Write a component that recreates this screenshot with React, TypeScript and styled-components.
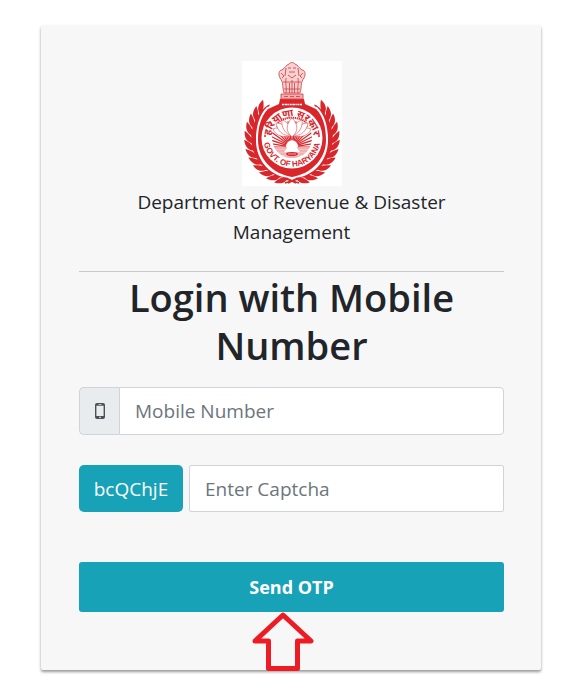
import React, { useState } from "react";
import styled, { createGlobalStyle } from "styled-components";

const GlobalStyle = createGlobalStyle`
  *, *::before, *::after { box-sizing: border-box; }
  body {
    margin: 0;
    background: #fff;
    color: #212529;
    font-family: "Open Sans", "Noto Sans", sans-serif;
    font-size: 19px;
    line-height: 30px;
  }
`;

const Page = styled.main`
  padding: 25px 40px 18px;
`;

const Card = styled.form`
  max-width: 500px;
  margin: 0 auto;
  padding: 36px 37px 58px 38px;
  background: #f7f7f7;
  border-radius: 2px;
  box-shadow: 0 2px 3px rgba(0, 0, 0, 0.4);
`;

const Header = styled.header`
  display: flex;
  flex-direction: column;
  align-items: center;
  padding-bottom: 24px;
  border-bottom: 1px solid #c9c9c9;
  text-align: center;
`;

const Department = styled.p`
  max-width: 340px;
  margin: 1px 0 0;
`;

const Title = styled.h1`
  margin: 1px 0 18px;
  font-size: 38px;
  font-weight: 600;
  line-height: 48px;
  text-align: center;
`;

const Row = styled.div<{ $gap: number; $after: number }>`
  display: flex;
  gap: ${(p) => p.$gap}px;
  margin-bottom: ${(p) => p.$after}px;
`;

const IconLabel = styled.label`
  display: flex;
  align-items: center;
  justify-content: center;
  width: 40px;
  background: #e9ecef;
  border: 1px solid #ced4da;
  border-right: 0;
  border-radius: 5px 0 0 5px;
`;

const CaptchaCode = styled.label`
  flex: none;
  width: 104px;
  background: #17a2b8;
  border-radius: 5px;
  color: #fff;
  line-height: 48px;
  height: 47px;
  text-align: center;
`;

const TextInput = styled.input<{ $round?: boolean }>`
  flex: 1;
  min-width: 0;
  height: ${(p) => (p.$round ? 48 : 47)}px;
  padding: 0 15px;
  background: #fff;
  border: 1px solid #ced4da;
  border-radius: ${(p) => (p.$round ? "0 4px 4px 0" : "2px")};
  color: #495057;
  font: inherit;
  &::placeholder { color: #6c757d; opacity: 1; }
`;

const SubmitArea = styled.div`
  position: relative;
`;

const SubmitButton = styled.button`
  display: block;
  width: 100%;
  height: 50px;
  padding: 0;
  background: #17a2b8;
  border: 0;
  border-radius: 3px;
  color: #fff;
  font: inherit;
  font-size: 18px;
  font-weight: 700;
  cursor: pointer;
`;

const Pointer = styled.svg`
  position: absolute;
  top: 100%;
  left: 48%;
  transform: translateX(-50%);
  pointer-events: none;
`;

const RED = "#d9262b";
const LEAF_ANGLES = [-42, -31, -20, -9, 2, 13, 24, 35, 46, 57, 68, 79];
const RAY_ANGLES = Array.from({ length: 21 }, (_, i) => -90 + i * 9);

const Wreath = () => (
  <g fill={RED}>
    {LEAF_ANGLES.map((a) => (
      <g key={a} transform={`rotate(${a} 50 77) translate(88 77)`}>
        <path d="M-1 5C-4 1-3-4 1-10C4-5 3 1-1 5Z" />
        <path d="M1 4C1-1 4-5 9-9C10-2 7 3 1 4Z" />
      </g>
    ))}
    <path d="M44 118L57 122M46 122L56 117" fill="none" stroke={RED} strokeWidth="1.6" />
  </g>
);

const Emblem = () => (
  <svg width="100" height="125" viewBox="0 0 100 125" role="img" aria-label="Government of Haryana">
    <defs>
      <path id="arc-top" d="M29.4 83A21.5 21.5 0 1 1 70.6 83" />
      <path id="arc-bottom" d="M21.5 77A28.5 28.5 0 0 0 78.5 77" />
    </defs>
    <rect width="100" height="125" fill="#fff" />
    <Wreath />
    <g transform="translate(100 0) scale(-1 1)"><Wreath /></g>
    <path d="M38 38H62L64 43L75 46C82 53 86 64 86 79C86 101 70 117 50 117S14 101 14 79C14 64 18 53 25 46L36 43Z" fill="#fff" />
    <path d="M38 38H62L63 43L74 48C81 55 84 66 84 79C84 98 69 113 50 116C31 113 16 98 16 79C16 66 19 55 26 48L37 43Z" fill={RED} />
    <circle cx="50" cy="77" r="30.5" fill="#fff" />
    <path d="M40 43.5H60" stroke="#fff" strokeWidth="1.5" strokeDasharray="2 .6 3 .5 1 .6" />
    <g fill="#efb0b1" stroke="#d9474a" strokeWidth=".9">
      <path d="M39 33H61V38H39Z" />
      <path d="M42 32C40 26 42 22 38 17C36 13 37 9 40 9C43 7 44 4 47 3C49 1 51 1 53 3C56 4 57 7 60 9C63 9 64 13 62 17C58 22 60 26 58 32Z" fill="#f7d2d2" />
      <path d="M44 32C45 27 43 22 44 17M56 32C55 27 57 22 56 17M47.500 32V22M50 32V19M52.500 32V22M42 35.500H46M48 35.500H52M54 35.500H58M41 21H59M42 28H58M46 7H49M51 7H54M47 11H53M46 14L50 17L54 14M39 12L42 15L40 17M61 12L58 15L60 17M44 7L43 15M56 7L57 15" fill="none" />
    </g>
    <clipPath id="scene"><circle cx="50" cy="77" r="20" /></clipPath>
    <g clipPath="url(#scene)">
      <g stroke={RED} strokeWidth="1.2">
        {RAY_ANGLES.map((a) => (
          <path key={a} d="M50 80V60" transform={`rotate(${a} 50 86)`} />
        ))}
      </g>
      <path d="M29 86H71V99H29Z" fill="#f5c0c1" />
      <path d="M29 87H71M31 90H69M33 93H43M57 93H67M36 96H64" stroke="#e68789" strokeWidth=".6" />
      <path d="M45 87A5.500 5.500 0 1 1 55 87L58 91H42Z" fill="#fff" />
      <ellipse cx="50" cy="93" rx="6" ry="2" fill={RED} />
      <path d="M46 93H54" stroke="#fff" strokeWidth=".6" />
    </g>
    <path d="M36 62C41 55 59 55 64 62" fill="none" stroke={RED} strokeWidth="2" strokeDasharray="1.3 .7" />
    <g fill="#fff" stroke="#e0484b" strokeWidth=".6">
      <path d="M31 68C37 65 43 69 48 75C40 77 33 74 31 68ZM69 68C63 65 57 69 52 75C60 77 67 74 69 68Z" />
      <path d="M34 62C42 62 47 68 49 75C40 75 35 69 34 62ZM66 62C58 62 53 68 51 75C60 75 65 69 66 62Z" />
      <path d="M40 59C47 61 50 68 50 75C43 73 39 66 40 59ZM60 59C53 61 50 68 50 75C57 73 61 66 60 59Z" />
      <path d="M50 57C57 64 56 71 50 76C44 71 43 64 50 57Z" />
    </g>
    <circle cx="23" cy="75" r="1" fill={RED} />
    <circle cx="77" cy="75" r="1" fill={RED} />
    <text fill={RED} fontSize="10" fontWeight="700" fontFamily='"Noto Sans", "Noto Sans Devanagari", sans-serif' textAnchor="middle">
      <textPath href="#arc-top" startOffset="50%">हरियाणा सरकार</textPath>
    </text>
    <text fill={RED} fontSize="8" fontWeight="700" fontFamily='"Liberation Sans", sans-serif' textAnchor="middle">
      <textPath href="#arc-bottom" startOffset="50%">GOVT. OF HARYANA</textPath>
    </text>
  </svg>
);

const PhoneIcon = () => (
  <svg width="10" height="16" viewBox="0 0 10 16" aria-hidden="true">
    <path fillRule="evenodd" fill="#495057" d="M2 0H8Q10 0 10 2V14Q10 16 8 16H2Q0 16 0 14V2Q0 0 2 0ZM1.400 2.800V13H8.600V2.800ZM3.500 1V1.800H6.500V1ZM5 13.600A.8.8 0 1 0 5 15.200A.8.8 0 1 0 5 13.600Z" />
  </svg>
);

export default function App() {
  const [mobile, setMobile] = useState("");
  const [captcha, setCaptcha] = useState("");
  return (
    <>
      <GlobalStyle />
      <Page>
        <Card onSubmit={(e: React.FormEvent) => e.preventDefault()}>
          <Header>
            <Emblem />
            <Department>Department of Revenue &amp; Disaster Management</Department>
          </Header>
          <Title>Login with Mobile Number</Title>
          <Row $gap={0} $after={30}>
            <IconLabel htmlFor="mobile" aria-label="Mobile Number"><PhoneIcon /></IconLabel>
            <TextInput $round id="mobile" type="tel" placeholder="Mobile Number" value={mobile} onChange={(e) => setMobile(e.target.value)} />
          </Row>
          <Row $gap={6} $after={50}>
            <CaptchaCode htmlFor="captcha">bcQChjE</CaptchaCode>
            <TextInput id="captcha" type="text" placeholder="Enter Captcha" autoComplete="off" value={captcha} onChange={(e) => setCaptcha(e.target.value)} />
          </Row>
          <SubmitArea>
            <SubmitButton type="submit">Send OTP</SubmitButton>
            <Pointer width="62" height="59" viewBox="0 0 62 59" aria-hidden="true">
              <path d="M31 3L59 29H45.500V56.500H16.500V29H3Z" fill="none" stroke="#ed1c24" strokeWidth="5" strokeLinejoin="round" />
            </Pointer>
          </SubmitArea>
        </Card>
      </Page>
    </>
  );
}
